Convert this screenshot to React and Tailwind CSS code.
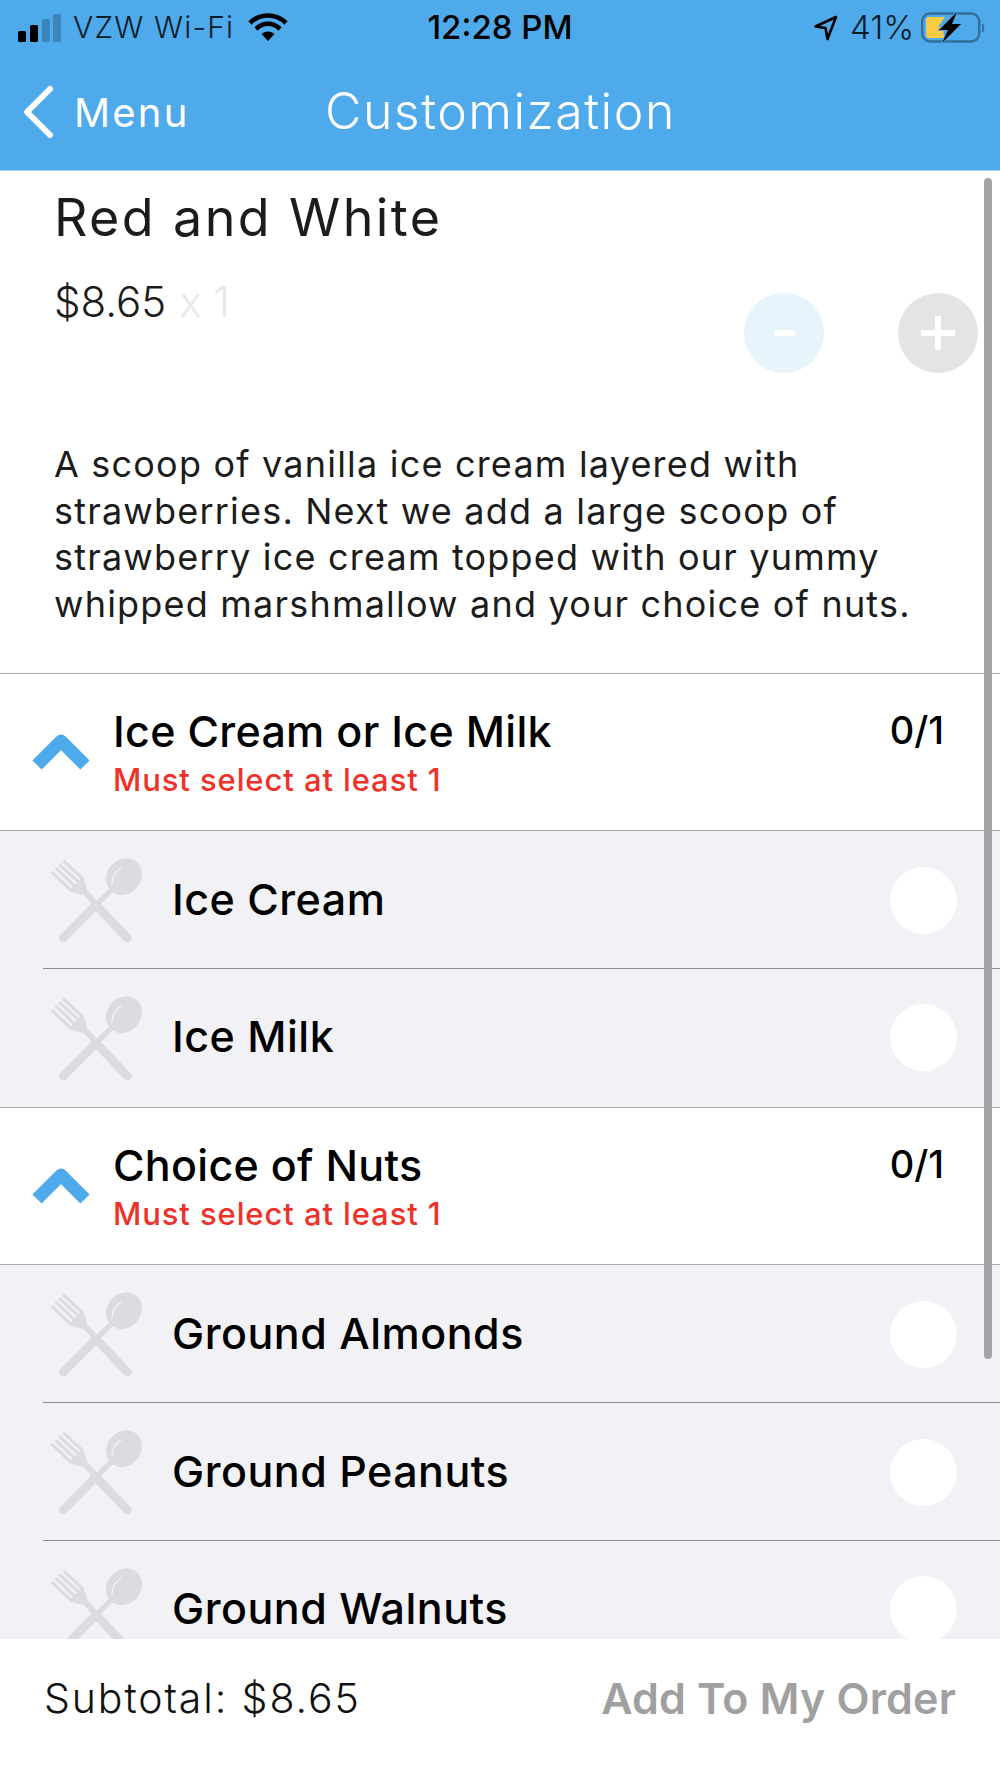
const inter = "font-['Inter','Liberation_Sans',sans-serif]";

function Cutlery() {
  return (
    <svg viewBox="0 0 330 300" className="h-[100px] w-[110px] shrink-0">
      <g stroke="#dcdce0" fill="none" strokeLinecap="round">
        <path d="M165 162 L262 264" strokeWidth="26" />
        <path d="M128 118 L170 165" strokeWidth="18" />
        <path d="M70 264 L165 168" strokeWidth="26" />
        <path d="M165 168 L212 122" strokeWidth="16" />
        <path d="M35 66 L96 124 M47 54 L108 112 M58 43 L120 100 M70 32 L130 88" strokeWidth="9" strokeLinecap="butt" />
      </g>
      <path d="M88 120 L126 80 C134 92 140 104 140 122 L136 134 C120 134 102 130 88 120 Z" fill="#dcdce0" />
      <ellipse cx="252" cy="80" rx="51" ry="58" transform="rotate(40 252 80)" fill="#dcdce0" />
      <path d="M216 102 C216 82 226 64 244 54" stroke="#f1f1f6" strokeWidth="4" fill="none" strokeLinecap="round" />
    </svg>
  );
}

function Chevron() {
  return (
    <svg viewBox="0 0 60 40" className="h-[40px] w-[60px] shrink-0">
      <path d="M6 31 L30 7 L54 31" stroke="#4eaaea" strokeWidth="13" fill="none" strokeLinejoin="round" />
    </svg>
  );
}

function Section({ title }) {
  return (
    <div className="flex h-[157px] items-center border-b border-[#a9a9ab] bg-white pl-[31px]">
      <div className="mt-[3px]"><Chevron /></div>
      <div className={`ml-[22px] flex-1 ${inter}`}>
        <div className="mt-[-1px] text-[43px] leading-[50px] font-medium tracking-[0.3px] text-black">{title}</div>
        <div className="mt-[6px] text-[31px] leading-[36px] font-medium tracking-[0.9px] text-[#ee3229]">Must select at least 1</div>
      </div>
      <div className={`mr-[56px] mb-[44px] text-[38px] leading-[46px] font-medium text-black ${inter}`}>0/1</div>
    </div>
  );
}

function Row({ name, border = true, tall = false }) {
  return (
    <div className={`${tall ? "h-[139px] border-b border-[#a9a9ab]" : "h-[138px]"} bg-[#f1f1f6]`}>
      <div className={`ml-[43px] flex h-full items-center ${border ? "border-b border-[#8d8d90]" : ""}`}>
        <div className="ml-[-3px]"><Cutlery /></div>
        <div className={`ml-[22px] flex-1 text-[43px] font-medium tracking-[0.5px] text-black ${inter} ${border ? "" : "mt-[-4px]"}`}>{name}</div>
        <div className={`mr-[43px] h-[67px] w-[67px] rounded-full bg-white ${border ? "mt-[2px]" : "mt-[-2px]"}`} />
      </div>
    </div>
  );
}

export default function App() {
  return (
    <div className="relative flex h-[1778px] w-[1000px] flex-col overflow-hidden bg-white">
      <header className="h-[171px] shrink-0 border-b border-[#a8d3f2] bg-[#4eaaea]">
        <div className={`flex h-[54px] items-center pt-[1px] text-[30px] text-[#0a1a26] ${inter}`}>
          <svg viewBox="0 0 44 30" className="ml-[17px] h-[30px] w-[44px] shrink-0">
            <rect x="1" y="18" width="8" height="11" rx="1.5" fill="#000" />
            <rect x="13" y="12" width="8" height="17" rx="1.5" fill="#000" />
            <rect x="25" y="6" width="8" height="23" rx="1.5" fill="#3a85bb" />
            <rect x="36" y="1" width="8" height="28" rx="1.5" fill="#3a85bb" />
          </svg>
          <span className="ml-[12px] w-[175px] font-light tracking-[1.2px]">VZW Wi-Fi</span>
          <svg viewBox="0 0 40 30" className="h-[30px] w-[40px] shrink-0">
            <path d="M2 10 C12 0 28 0 38 10 M8 16 C15 9 25 9 32 16" stroke="#000" strokeWidth="4.6" fill="none" />
            <path d="M13.5 21 C17 17.5 23 17.5 26.5 21 L20 28 Z" fill="#000" />
          </svg>
          <span className="ml-[132px] w-[160px] text-center text-[33px] font-medium text-black whitespace-nowrap">12:28 PM</span>
          <svg viewBox="0 0 24 26" className="ml-[234px] h-[26px] w-[24px] shrink-0">
            <path d="M1.5 11.5 L22 2 L13.5 24 L11.5 13 Z" stroke="#000" strokeWidth="2.6" fill="none" strokeLinejoin="round" />
          </svg>
          <span className="ml-[12px] w-[62px] text-[33px] font-light whitespace-nowrap">41%</span>
          <svg viewBox="0 0 64 32" className="ml-[9px] h-[32px] w-[64px] shrink-0">
            <rect x="1.2" y="1.5" width="57" height="28" rx="8" fill="none" stroke="#336f9d" strokeWidth="2.4" />
            <path d="M8 5 H24 L17 15 H22 L23 26 H8 Q5 26 5 23 V8 Q5 5 8 5 Z" fill="#f9cb45" />
            <path d="M36 0 L18 18 H27 L21 31 L40 12 H31 Z" fill="#000" stroke="#4eaaea" strokeWidth="1.6" paintOrder="stroke" />
            <path d="M61.5 12 Q63 16 61.5 20" stroke="#336f9d" strokeWidth="2" fill="none" />
          </svg>
        </div>
        <div className={`flex h-[116px] items-center text-white ${inter}`}>
          <svg viewBox="0 0 32 54" className="ml-[22px] mt-[-1px] h-[54px] w-[32px] shrink-0">
            <path d="M28 4 L5 27 L28 50" stroke="#fff" strokeWidth="6" fill="none" strokeLinecap="round" strokeLinejoin="round" />
          </svg>
          <span className="ml-[20px] mt-[2px] w-[112px] text-[40px] tracking-[2.2px]">Menu</span>
          <span className="ml-[139px] mt-[-2px] text-[50px] font-light tracking-[1.5px] whitespace-nowrap">Customization</span>
        </div>
      </header>

      <main className="min-h-0 flex-1 overflow-hidden">
        <div className={`relative h-[503px] border-b border-[#a9a9ab] text-[#1c1c1c] ${inter}`}>
          <h1 className="pl-[54px] pt-[13px] text-[52px] leading-[68px] font-normal tracking-[2.4px]">Red and White</h1>
          <div className="mt-[25px] flex gap-[13px] pl-[54px] text-[42px] leading-[50px] font-light">
            <span>$8.65</span>
            <span className="text-[#e8e8e8]">x 1</span>
          </div>
          <p className="mt-[114px] pl-[54px] text-[36px] leading-[46.5px] font-normal tracking-[1.2px] whitespace-nowrap">
            A scoop of vanilla ice cream layered with<br />
            strawberries. Next we add a large scoop of<br />
            strawberry ice cream topped with our yummy<br />
            whipped marshmallow and your choice of nuts.
          </p>
          <div className="absolute left-[744px] top-[122px] flex h-[80px] w-[80px] items-center justify-center rounded-full bg-[#e7f4fb]">
            <div className="h-[6px] w-[21px] bg-white" />
          </div>
          <div className="absolute left-[898px] top-[122px] flex h-[80px] w-[80px] items-center justify-center rounded-full bg-[#e4e4e4]">
            <svg viewBox="0 0 34 34" className="h-[34px] w-[34px]"><path d="M17 0 V34 M0 17 H34" stroke="#fff" strokeWidth="6" /></svg>
          </div>
        </div>
        <Section title="Ice Cream or Ice Milk" />
        <Row name="Ice Cream" />
        <Row name="Ice Milk" border={false} tall />
        <Section title="Choice of Nuts" />
        <Row name="Ground Almonds" />
        <Row name="Ground Peanuts" />
        <Row name="Ground Walnuts" border={false} />
      </main>

      <footer className={`flex h-[139px] shrink-0 items-center justify-between bg-white pb-[20px] pl-[44px] pr-[44px] ${inter}`}>
        <span className="text-[41px] font-light tracking-[1.9px] text-[#111]">Subtotal: $8.65</span>
        <span className="text-[43px] font-semibold tracking-[0.2px] text-[#a0a0a0]">Add To My Order</span>
      </footer>

      <div className="absolute left-[984px] top-[178px] h-[1181px] w-[8px] rounded-full bg-[#a5a5a7]" />
    </div>
  );
}
